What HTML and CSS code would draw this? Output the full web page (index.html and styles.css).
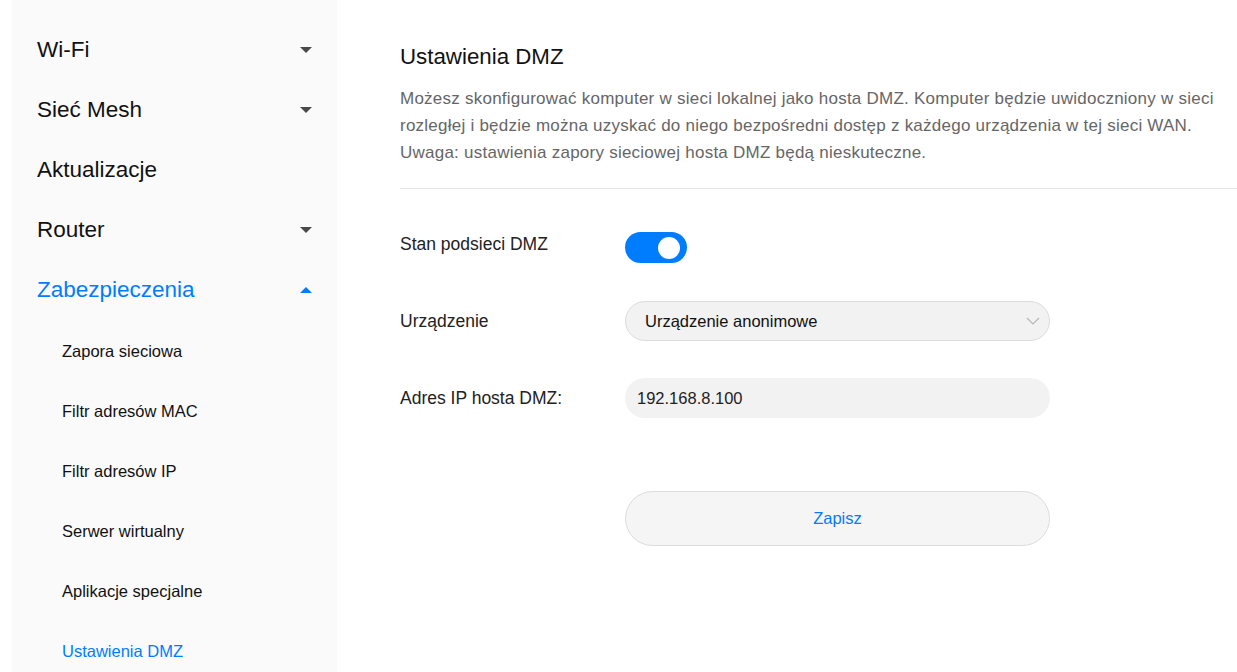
FILE: index.html
```html
<!DOCTYPE html>
<html lang="pl">
<head>
<meta charset="utf-8">
<title>Ustawienia DMZ</title>
<link rel="stylesheet" href="styles.css">
</head>
<body>
<div class="page">
  <nav class="sidebar">
    <div class="nav-item"><span>Wi-Fi</span><span class="tri down"></span></div>
    <div class="nav-item"><span>Sieć Mesh</span><span class="tri down"></span></div>
    <div class="nav-item"><span>Aktualizacje</span></div>
    <div class="nav-item"><span>Router</span><span class="tri down"></span></div>
    <div class="nav-item active"><span>Zabezpieczenia</span><span class="tri up"></span></div>
    <div class="sub-item first">Zapora sieciowa</div>
    <div class="sub-item">Filtr adresów MAC</div>
    <div class="sub-item">Filtr adresów IP</div>
    <div class="sub-item">Serwer wirtualny</div>
    <div class="sub-item">Aplikacje specjalne</div>
    <div class="sub-item active">Ustawienia DMZ</div>
  </nav>
  <main class="main">
    <h1 class="title">Ustawienia DMZ</h1>
    <p class="desc">Możesz skonfigurować komputer w sieci lokalnej jako hosta DMZ. Komputer będzie uwidoczniony w sieci<br>rozległej i będzie można uzyskać do niego bezpośredni dostęp z każdego urządzenia w tej sieci WAN.<br>Uwaga: ustawienia zapory sieciowej hosta DMZ będą nieskuteczne.</p>
    <div class="divider"></div>
    <div class="form">
      <div class="row row-toggle">
        <div class="label">Stan podsieci DMZ</div>
        <div class="toggle"><span class="knob"></span></div>
      </div>
      <div class="row row-select">
        <div class="label">Urządzenie</div>
        <div class="select"><span>Urządzenie anonimowe</span>
          <svg class="chev" width="14" height="8" viewBox="0 0 14 8"><path d="M1 1 L7 7 L13 1" fill="none" stroke="#b4b4b4" stroke-width="1.1"/></svg>
        </div>
      </div>
      <div class="row row-input">
        <div class="label">Adres IP hosta DMZ:</div>
        <div class="input">192.168.8.100</div>
      </div>
      <div class="row row-btn">
        <div class="label"></div>
        <div class="button">Zapisz</div>
      </div>
    </div>
  </main>
</div>
</body>
</html>
```
FILE: styles.css
```css
html, body {
  margin: 0;
  padding: 0;
  background: #fff;
  font-family: "Liberation Sans", Arial, sans-serif;
}
.page {
  display: flex;
  height: 672px;
  overflow: hidden;
  padding-left: 12px;
}
.sidebar {
  width: 325px;
  flex: none;
  background: #fafafa;
  padding-top: 20px;
  box-sizing: border-box;
}
.nav-item {
  height: 60px;
  display: flex;
  align-items: center;
  justify-content: space-between;
  padding-left: 25px;
  padding-right: 25px;
  font-size: 22.5px;
  color: #111;
}
.nav-item.active { color: #007dff; }
.tri {
  width: 0;
  height: 0;
  border-left: 6px solid transparent;
  border-right: 6px solid transparent;
}
.tri.down { border-top: 6px solid #4a4a4a; }
.tri.up { border-bottom: 6px solid #007dff; }
.sub-item {
  height: 60px;
  display: flex;
  align-items: center;
  padding-left: 50px;
  font-size: 16.5px;
  color: #111;
}
.sub-item.first { margin-top: 1px; }
.sub-item.active { color: #007dff; }
.main {
  flex: 1;
  padding-left: 63px;
  padding-top: 42px;
}
.title {
  margin: 0;
  font-size: 22.3px;
  font-weight: normal;
  line-height: 30px;
  color: #111;
}
.desc {
  margin: 13px 0 0 0;
  font-size: 17px;
  letter-spacing: 0.24px;
  line-height: 27px;
  color: #666;
  white-space: nowrap;
}
.divider {
  height: 1px;
  background: #e6e6e6;
  margin-top: 22px;
}
.form { margin-top: 39px; }
.row {
  display: flex;
  align-items: center;
}
.label {
  width: 225px;
  flex: none;
  font-size: 17.5px;
  color: #222;
}
.row-toggle { height: 40px; align-items: flex-start; }
.row-toggle .label { line-height: 32px; }
.row-toggle .toggle { margin-top: 4px; }
.row-select { margin-top: 33px; }
.row-input { margin-top: 37px; }
.row-btn { margin-top: 73px; }
.toggle {
  width: 62px;
  height: 31px;
  border-radius: 16px;
  background: #007dff;
  display: flex;
  align-items: center;
  justify-content: flex-end;
  padding-right: 7px;
  box-sizing: border-box;
}
.knob {
  width: 22px;
  height: 22px;
  border-radius: 50%;
  background: #fff;
}
.select {
  width: 425px;
  height: 40px;
  box-sizing: border-box;
  border: 1px solid #dcdcdc;
  border-radius: 20px;
  background: #f2f2f2;
  display: flex;
  align-items: center;
  justify-content: space-between;
  padding: 0 9px 0 19px;
  font-size: 16.5px;
  color: #111;
}
.input {
  width: 425px;
  height: 40px;
  box-sizing: border-box;
  border-radius: 20px;
  background: #f2f2f2;
  display: flex;
  align-items: center;
  padding-left: 12px;
  font-size: 16.5px;
  color: #222;
}
.button {
  width: 425px;
  height: 55px;
  box-sizing: border-box;
  border: 1px solid #dcdcdc;
  border-radius: 28px;
  background: #f5f5f5;
  display: flex;
  align-items: center;
  justify-content: center;
  font-size: 16.5px;
  color: #007dff;
}
```
